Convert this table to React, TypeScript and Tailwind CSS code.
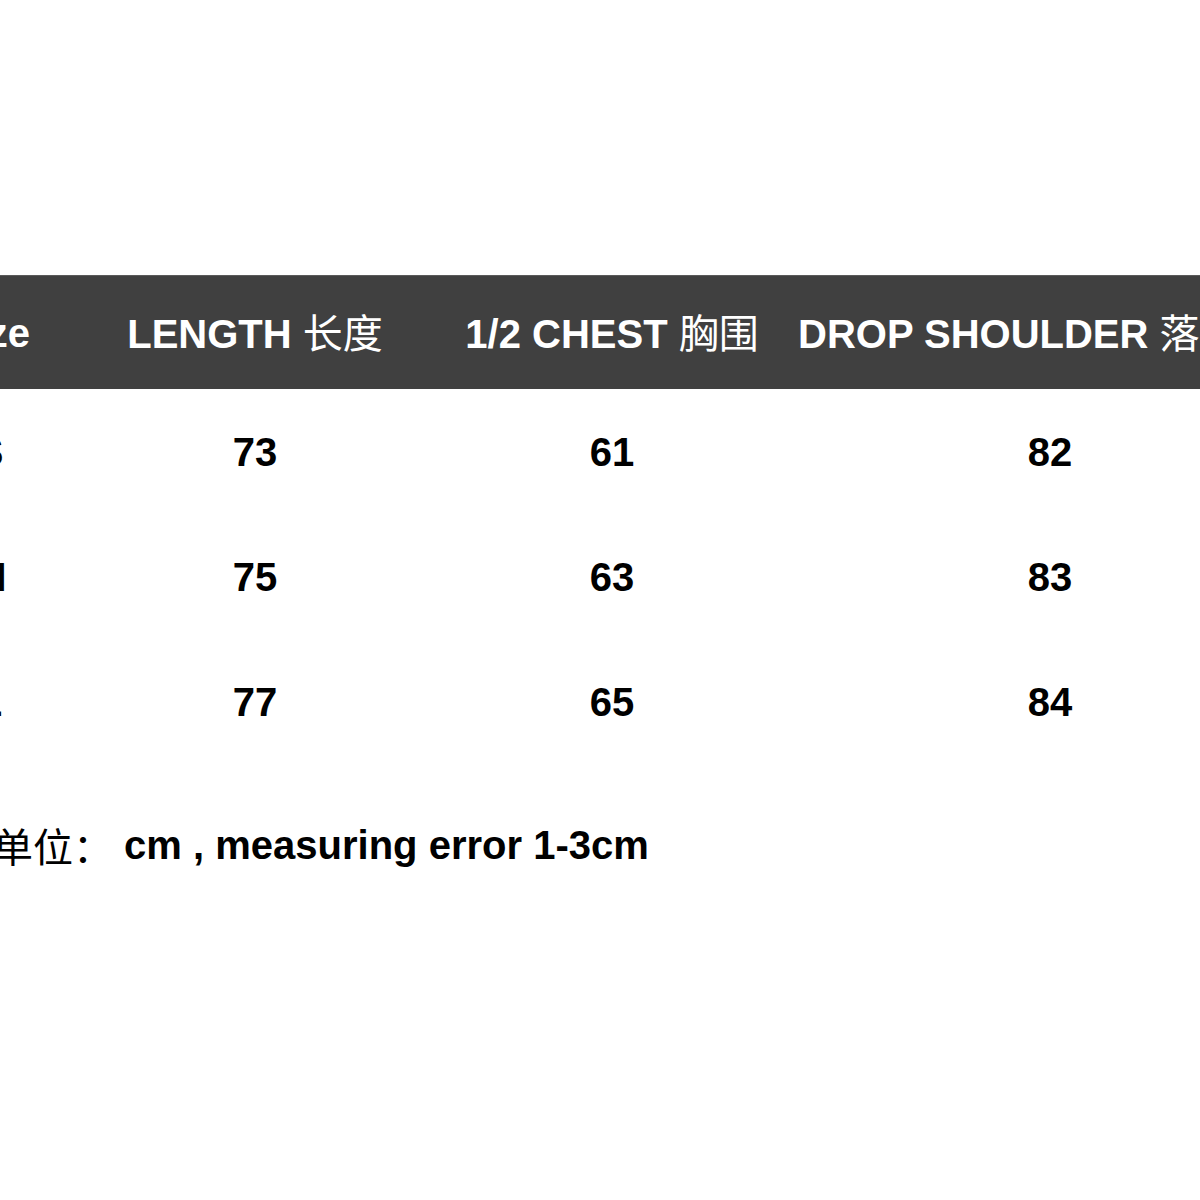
const cols = 'grid grid-cols-[240px_290px_424px_452px] items-center';

const rows = [
  { size: 'S', length: '73', chest: '61', drop: '82' },
  { size: 'M', length: '75', chest: '63', drop: '83' },
  { size: 'L', length: '77', chest: '65', drop: '84' },
];

function Cjk({ children }: { children: React.ReactNode }) {
  return (
    <span className="font-normal [font-family:'Noto_Sans_CJK_SC',sans-serif]">{children}</span>
  );
}

export default function App() {
  return (
    <div className="w-[1200px] h-[1200px] overflow-hidden bg-white pt-[275px] font-bold text-[40px] leading-none [font-family:'Liberation_Sans','Noto_Sans_CJK_SC',sans-serif]">
      {/* table is wider than the shot, left and right edges are cropped */}
      <div className="w-[1406px] -ml-[130px]">
        <div className={`${cols} h-[114px] bg-[#404040] border-t border-[#5a5a5a] text-white whitespace-nowrap`}>
          <div className="text-center">Size</div>
          <div className="text-center">
            LENGTH <Cjk>长度</Cjk>
          </div>
          <div className="text-center">
            1/2 CHEST <Cjk>胸围</Cjk>
          </div>
          <div className="-ml-[26px]">
            DROP SHOULDER <Cjk>落肩袖长</Cjk>
          </div>
        </div>

        {rows.map((r) => (
          <div key={r.size} className={`${cols} h-[125px] text-black`}>
            <div className="text-center">{r.size}</div>
            <div className="text-center">{r.length}</div>
            <div className="text-center">{r.chest}</div>
            <div className="text-center">{r.drop}</div>
          </div>
        ))}
      </div>

      <div className="-ml-[7px] mt-[61px] h-[40px] flex items-center whitespace-nowrap text-black">
        <Cjk>单位：</Cjk>
        <span>&nbsp;cm , measuring error 1-3cm</span>
      </div>
    </div>
  );
}
